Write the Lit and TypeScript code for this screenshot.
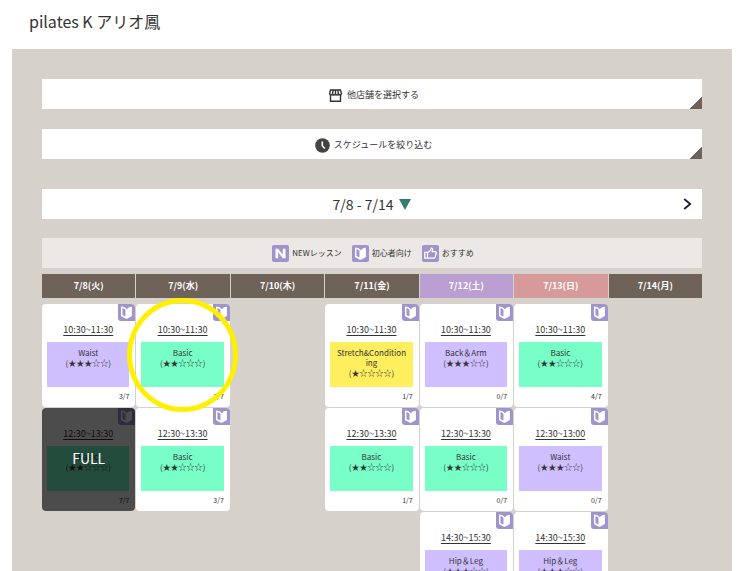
import { LitElement, html, css, svg, nothing } from "lit";
import { customElement, property } from "lit/decorators.js";
import { classMap } from "lit/directives/class-map.js";

interface Lesson {
  time: string;
  name: string;
  level: number;
  tone: "violet" | "mint" | "yellow";
  booked: number;
  marked?: boolean;
}

const CAPACITY = 7;

const days = [
  { label: "7/8(火)", kind: "" },
  { label: "7/9(水)", kind: "" },
  { label: "7/10(木)", kind: "" },
  { label: "7/11(金)", kind: "" },
  { label: "7/12(土)", kind: "sat" },
  { label: "7/13(日)", kind: "sun" },
  { label: "7/14(月)", kind: "" },
];

const waist = (time: string, booked: number): Lesson => ({ time, name: "Waist", level: 3, tone: "violet", booked });
const basic = (time: string, booked: number, marked = false): Lesson => ({ time, name: "Basic", level: 2, tone: "mint", booked, marked });
const hipLeg = (time: string, booked: number): Lesson => ({ time, name: "Hip＆Leg", level: 3, tone: "violet", booked });

const rows: (Lesson | null)[][] = [
  [
    waist("10:30~11:30", 3),
    basic("10:30~11:30", 3, true),
    null,
    { time: "10:30~11:30", name: "Stretch&Conditioning", level: 1, tone: "yellow", booked: 1 },
    { time: "10:30~11:30", name: "Back＆Arm", level: 3, tone: "violet", booked: 0 },
    basic("10:30~11:30", 4),
    null,
  ],
  [
    basic("12:30~13:30", 7),
    basic("12:30~13:30", 3),
    null,
    basic("12:30~13:30", 1),
    basic("12:30~13:30", 0),
    waist("12:30~13:00", 0),
    null,
  ],
  [null, null, null, null, hipLeg("14:30~15:30", 0), hipLeg("14:30~15:30", 0), null],
];

const glyphs = {
  new: svg`<path d="M3.500 13.200V3.800H6.200L10.800 9.800V3.800H13.500V13.200H10.800L6.200 7.200V13.200Z" fill="#fff"/>`,
  beginner: svg`
    <path d="M8.200 5.600V14L3.700 11.500V3.300C5.600 3.400 7.200 4.100 8.200 5.600Z" fill="none" stroke="#fff" stroke-width="1.500" stroke-linejoin="round"/>
    <path d="M8.600 5.500C9.600 3.800 11.500 2.800 13.900 2.700V11.900L8.600 15Z" fill="#fff"/>`,
  recommend: svg`<path d="M2.800 7.300H5.500V13.200H2.800ZM5.500 7.700L8.600 5.200L9.100 3.100C10.500 3 10.900 4.200 10.500 5.500L10.100 6.700H13.300C14.200 6.700 14.500 7.500 14.200 8.300L13.100 12.100C12.900 12.900 12.500 13.200 11.800 13.200H5.500" fill="none" stroke="#fff" stroke-width="1.300" stroke-linejoin="round"/>`,
};

@customElement("lesson-badge")
export class LessonBadge extends LitElement {
  @property() kind: keyof typeof glyphs = "beginner";

  static styles = css`
    :host { display: block; width: 17px; height: 17px; border-radius: 2px; overflow: hidden; background: #9f94cb; }
    .glyph { display: block; width: 100%; height: 100%; }
  `;

  render() {
    return html`<svg class="glyph" viewBox="0 0 17 17" aria-hidden="true">${glyphs[this.kind]}</svg>`;
  }
}

@customElement("lesson-card")
export class LessonCard extends LitElement {
  @property({ attribute: false }) lesson!: Lesson;

  static styles = css`
    :host { display: block; }
    .card {
      position: relative;
      box-sizing: border-box;
      height: 103px;
      padding: 19px 6px 0 5px;
      border-radius: 4px;
      background: #fff;
      color: #333;
      text-align: center;
    }
    .badge { position: absolute; top: 0; right: 0; border-radius: 0 4px 0 3px; }
    .time {
      display: block;
      font-size: 9px;
      line-height: 14px;
      color: #333;
      text-underline-offset: 2px;
    }
    .lesson {
      box-sizing: border-box;
      height: 45px;
      margin-top: 5px;
      padding: 6px 6px 0;
      font-size: 8px;
      line-height: 10px;
      word-break: break-all;
    }
    .violet { background: #d0bfff; }
    .mint { background: #78ffc8; }
    .yellow { background: #ffee5e; }
    .level { display: block; white-space: nowrap; }
    .count { font-size: 7px; line-height: 10px; margin-top: 4px; text-align: right; }
    .full {
      position: absolute;
      inset: 0;
      display: grid;
      place-items: center;
      padding-bottom: 3px;
      border-radius: 4px;
      background: rgba(0, 0, 0, 0.7);
      color: #fff;
      font-size: 14px;
      line-height: 20px;
    }
    .ring {
      position: absolute;
      inset: -6px -8px -5px -9px;
      border: 5px solid #fff000;
      border-radius: 50%;
      z-index: 2;
      pointer-events: none;
    }
  `;

  render() {
    const l = this.lesson;
    const stars = "★".repeat(l.level) + "☆".repeat(5 - l.level);
    return html`
      <article class="card">
        <lesson-badge class="badge"></lesson-badge>
        <a class="time" href="#">${l.time}</a>
        <div class=${classMap({ lesson: true, [l.tone]: true })}>
          ${l.name}<span class="level">(${stars})</span>
        </div>
        <div class="count">${l.booked}/${CAPACITY}</div>
        ${l.booked === CAPACITY ? html`<div class="full">FULL</div>` : nothing}
        ${l.marked ? html`<div class="ring"></div>` : nothing}
      </article>
    `;
  }
}

@customElement("app-root")
export class AppRoot extends LitElement {
  static styles = css`
    :host {
      display: block;
      height: 100vh;
      overflow: hidden auto;
      scrollbar-width: none;
      background: #fff;
      color: #333;
      font-family: "Noto Sans CJK JP", "Noto Sans", sans-serif;
    }
    .title { margin: 0; padding: 9px 29px 16px; font-size: 16px; line-height: 24px; font-weight: 400; }
    .panel { margin: 0 7px 0 12px; padding: 30px; background: #d6d1ca; }
    .bar {
      display: flex;
      align-items: center;
      justify-content: center;
      gap: 4px;
      width: 100%;
      height: 30px;
      margin: 0 0 20px;
      padding: 2px 0 0 3px;
      border: 0;
      background: #fff;
      color: #333;
      font-family: inherit;
      font-size: 9px;
      line-height: 16px;
      cursor: pointer;
    }
    .corner { background: linear-gradient(135deg, transparent 50%, #6f6259 50%) right bottom / 13px 13px no-repeat #fff; }
    .icon { display: block; width: 15px; height: 15px; }
    .week {
      display: grid;
      grid-template-columns: 30px 1fr 30px;
      align-items: center;
      height: 30px;
      margin: 30px 0 19px;
      background: #fff;
    }
    .range, .next { border: 0; padding: 0; background: none; color: #333; font-family: inherit; cursor: pointer; }
    .range { grid-column: 2; display: flex; align-items: center; justify-content: center; gap: 6px; font-size: 14px; line-height: 20px; }
    .down { width: 12px; height: 11px; }
    .next { display: grid; place-items: center; height: 30px; }
    .chevron { width: 9px; height: 12px; }
    .legend {
      display: flex;
      align-items: center;
      justify-content: center;
      gap: 10px;
      height: 30px;
      margin: 0 0 5px;
      padding: 0 0 0 2px;
      box-sizing: border-box;
      list-style: none;
      background: #ece8e5;
      font-size: 8px;
      line-height: 14px;
    }
    .entry { display: flex; align-items: center; gap: 3px; }
    .schedule { width: calc(100% + 2px); margin: 0 -1px; table-layout: fixed; border-spacing: 1px; }
    .day { height: 24px; padding: 0; background: #6f6259; color: #fff; font-size: 9px; line-height: 16px; font-weight: 700; }
    .sat { background: #bc9fd2; }
    .sun { background: #d69a9a; }
    .slot { padding: 0; vertical-align: top; }
    .first .slot { padding-top: 5px; }
  `;

  render() {
    return html`
      <h1 class="title">pilates K アリオ鳳</h1>
      <main class="panel">
        <button class="bar corner">
          <svg class="icon" viewBox="0 0 15 15" fill="none" stroke="#333" stroke-width="1.400" aria-hidden="true">
            <path d="M2.500 2H12.500L13.400 5.500C13.400 7.500 10.400 7.500 10.400 5.500C10.400 7.500 7.500 7.500 7.500 5.500C7.500 7.500 4.600 7.500 4.600 5.500C4.600 7.500 1.600 7.500 1.600 5.500ZM5.200 2L4.600 5.500M7.500 2V5.500M9.800 2L10.400 5.500M2.500 7V13.300H12.500V7"/>
          </svg>
          他店舗を選択する
        </button>
        <button class="bar corner">
          <svg class="icon" viewBox="0 0 15 15" aria-hidden="true">
            <circle cx="7.500" cy="7.500" r="7.300" fill="#444"/>
            <path d="M7.300 3.500V7.800L9.800 10.500" fill="none" stroke="#fff" stroke-width="1.600"/>
          </svg>
          スケジュールを絞り込む
        </button>
        <div class="week">
          <button class="range">
            7/8 - 7/14
            <svg class="down" viewBox="0 0 12 11" aria-hidden="true"><path d="M0 0H12L6 11Z" fill="#327b70"/></svg>
          </button>
          <button class="next" aria-label="次の週">
            <svg class="chevron" viewBox="0 0 9 12" aria-hidden="true"><path d="M1.200 1L7.200 6L1.200 11" fill="none" stroke="#1c1c3c" stroke-width="1.800"/></svg>
          </button>
        </div>
        <ul class="legend">
          <li class="entry"><lesson-badge kind="new"></lesson-badge>NEWレッスン</li>
          <li class="entry"><lesson-badge kind="beginner"></lesson-badge>初心者向け</li>
          <li class="entry"><lesson-badge kind="recommend"></lesson-badge>おすすめ</li>
        </ul>
        <table class="schedule">
          <thead>
            <tr>${days.map((d) => html`<th scope="col" class="day ${d.kind}">${d.label}</th>`)}</tr>
          </thead>
          <tbody>
            ${rows.map(
              (row, i) => html`<tr class=${classMap({ first: i === 0 })}>
                ${row.map((l) => html`<td class="slot">${l ? html`<lesson-card .lesson=${l}></lesson-card>` : nothing}</td>`)}
              </tr>`
            )}
          </tbody>
        </table>
      </main>
    `;
  }
}
